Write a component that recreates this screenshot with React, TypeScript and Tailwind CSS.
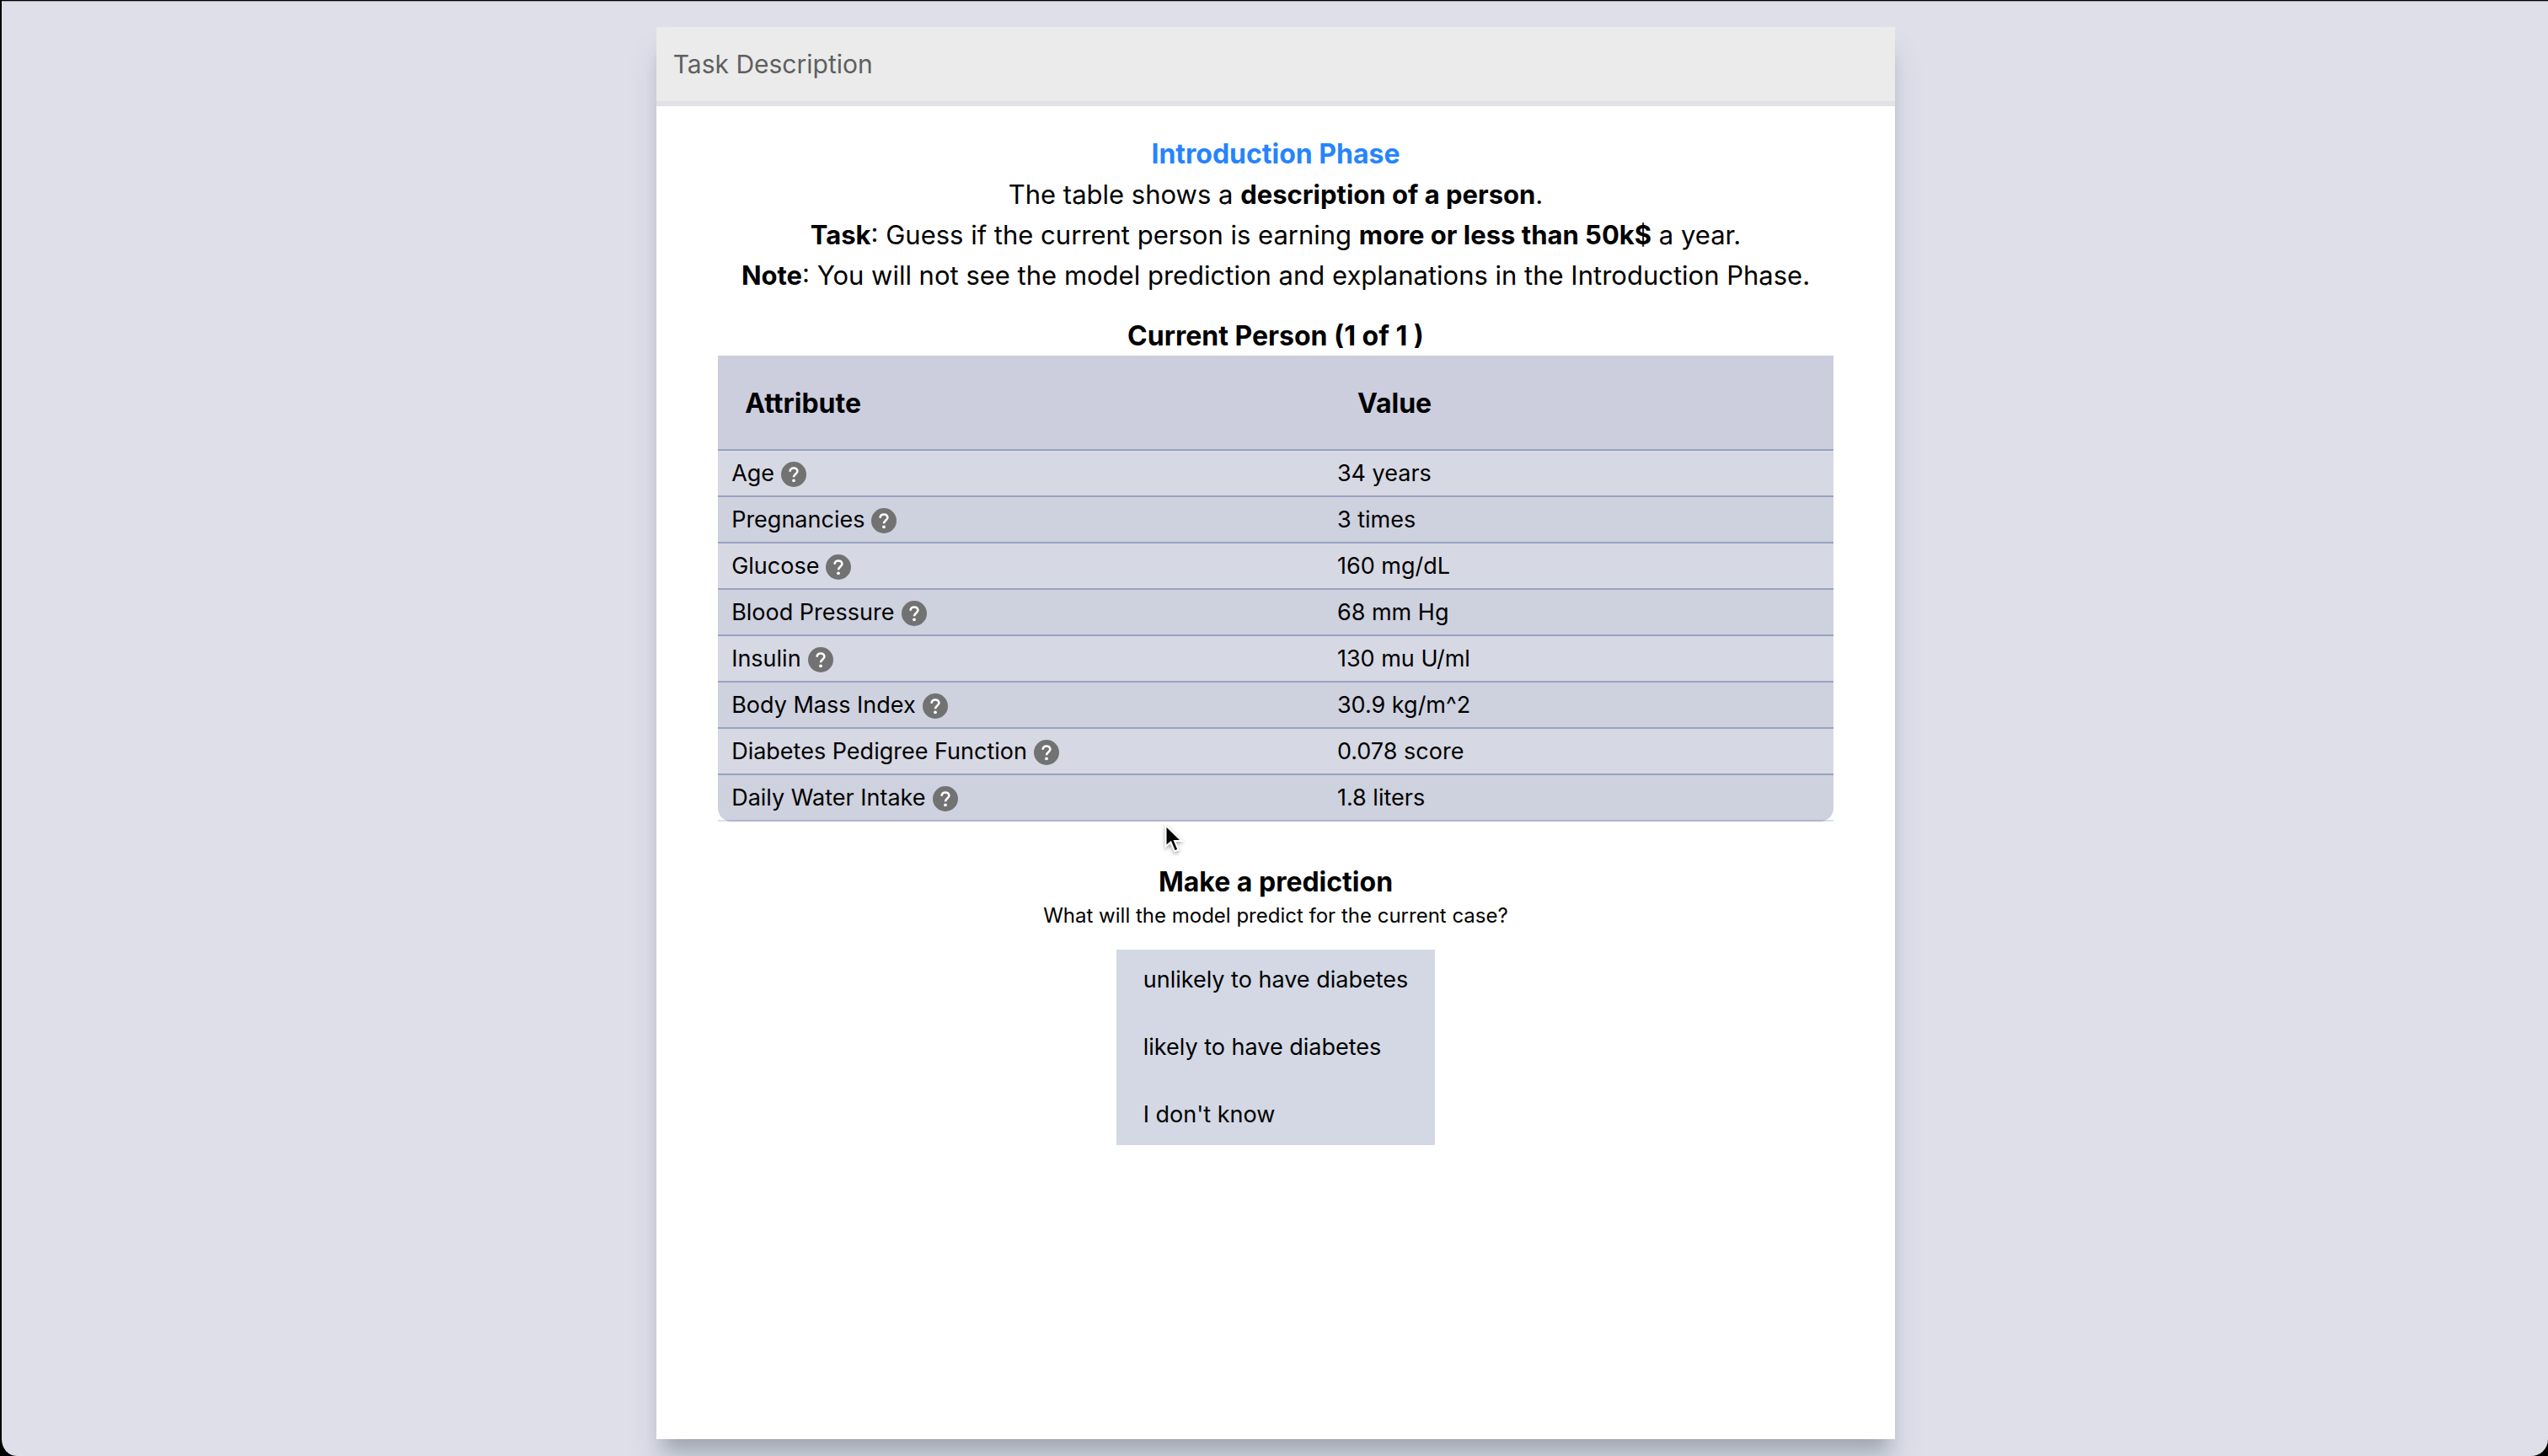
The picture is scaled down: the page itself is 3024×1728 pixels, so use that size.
const rows: [string, string][] = [
  ["Age", "34 years"],
  ["Pregnancies", "3 times"],
  ["Glucose", "160 mg/dL"],
  ["Blood Pressure", "68 mm Hg"],
  ["Insulin", "130 mu U/ml"],
  ["Body Mass Index", "30.9 kg/m^2"],
  ["Diabetes Pedigree Function", "0.078 score"],
  ["Daily Water Intake", "1.8 liters"],
];

const options = ["unlikely to have diabetes", "likely to have diabetes", "I don't know"];

function HelpButton({ label }: { label: string }) {
  return (
    <button type="button" aria-label={`About ${label}`} className="size-[30px] rounded-full">
      <svg viewBox="0 0 30 30" className="size-full" aria-hidden="true">
        <circle cx="15" cy="15" r="15" fill="#727272" />
        <path
          d="M10.600 11.700C10.600 8.900 12.600 7.500 15 7.500C17.600 7.500 19.400 9.100 19.400 11.300C19.400 14.300 15 14.700 15 18.300"
          fill="none"
          stroke="white"
          strokeWidth="2.600"
        />
        <circle cx="15" cy="22.300" r="1.900" fill="white" />
      </svg>
    </button>
  );
}

function Cursor() {
  return (
    <svg
      aria-hidden="true"
      viewBox="0 0 24 38"
      className="pointer-events-none absolute top-0.5 left-[41%] h-[38px] w-6 drop-shadow-[0_2px_2px_rgba(0,0,0,0.35)]"
    >
      <path
        d="M1.500 2.500V27.500L7.500 22.500L12 33.500L16.500 31.500L12 21H20.500Z"
        fill="black"
        stroke="white"
        strokeWidth="2"
      />
    </svg>
  );
}

export default function App() {
  return (
    <div className="min-h-screen bg-black font-['Inter',sans-serif] text-black">
      <div className="flex min-h-screen flex-col items-center rounded-b-[20px] border-t border-l-2 border-black bg-[#dfdfea] pt-[31px] pb-5 pl-0.5 shadow-[inset_0_1px_0_#a09ea6]">
        <main className="flex w-[48.7%] grow flex-col bg-white shadow-[0_32px_32px_rgba(60,100,110,0.18),0_20px_20px_-10px_rgba(0,0,0,0.2)]">
          <header className="flex h-[94px] items-center border-b-6 border-[#e1e1e6] bg-[#ebebeb] px-5 text-[30px] text-[#5f5f5f]">
            Task Description
          </header>
          <section className="pt-[33px] text-center text-[31px] leading-[48px]">
            <h1 className="text-[32px] font-bold text-[#2684fc]">Introduction Phase</h1>
            <p>The table shows a <b>description of a person</b>.</p>
            <p><b>Task</b>: Guess if the current person is earning <b>more or less than 50k$</b> a year.</p>
            <p><b>Note</b>: You will not see the model prediction and explanations in the Introduction Phase.</p>
          </section>
          <section className="px-[5%] pt-[25px]">
            <h2 className="text-center text-[32px] leading-[46px] font-bold">Current Person (1 of 1 )</h2>
            <div className="shadow-[inset_0_-2px_0_#dcdff0]">
              <table className="w-full border-separate border-spacing-0 overflow-hidden rounded-b-2xl text-[27px]">
                <thead>
                  <tr className="h-[113px] bg-[#cccede] text-left text-[32px]">
                    <th className="w-[54.3%] border-b-2 border-[#98a2c2] px-8 pt-0.5">Attribute</th>
                    <th className="border-b-2 border-[#98a2c2] px-10 pt-0.5">Value</th>
                  </tr>
                </thead>
                <tbody>
                  {rows.map(([name, value]) => (
                    <tr
                      key={name}
                      className="h-[55px] border-[#98a2c2] bg-[#d6d8e3] last:border-[#b0b4cf] even:bg-[#ced1de]"
                    >
                      <td className="border-b-2 border-inherit px-4 pt-0.5">
                        <div className="flex items-center gap-2">{name}<HelpButton label={name} /></div>
                      </td>
                      <td className="border-b-2 border-inherit px-4 pt-0.5">{value}</td>
                    </tr>
                  ))}
                </tbody>
              </table>
            </div>
          </section>
          <section className="relative flex flex-col items-center pt-12">
            <Cursor />
            <h2 className="text-[32px] leading-[48px] font-bold">Make a prediction</h2>
            <p className="text-[24px] leading-8">What will the model predict for the current case?</p>
            <div className="mt-6 flex flex-col gap-2 bg-[#d3d8e4] text-[27px]">
              {options.map((o) => (
                <button key={o} type="button" className="h-[72px] px-8 text-left">{o}</button>
              ))}
            </div>
          </section>
        </main>
      </div>
    </div>
  );
}
